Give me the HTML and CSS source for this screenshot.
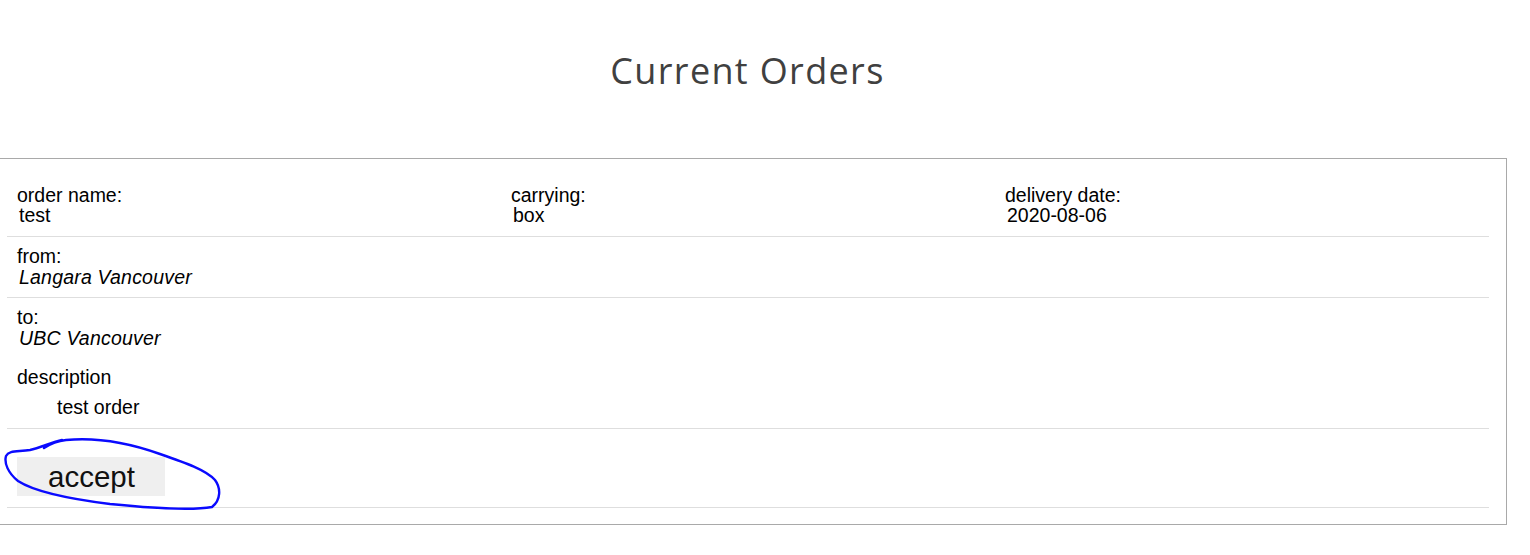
FILE: index.html
```html
<!DOCTYPE html>
<html lang="en">
<head>
<meta charset="utf-8">
<title>Current Orders</title>
<link rel="stylesheet" href="styles.css">
</head>
<body>
<div class="page">
  <h1 class="title">Current Orders</h1>
  <div class="orders">
    <div class="order">
      <div class="row row-meta">
        <div class="field">
          <div class="label">order name:</div>
          <div class="value">test</div>
        </div>
        <div class="field">
          <div class="label">carrying:</div>
          <div class="value">box</div>
        </div>
        <div class="field">
          <div class="label">delivery date:</div>
          <div class="value">2020-08-06</div>
        </div>
      </div>
      <div class="row">
        <div class="label">from:</div>
        <div class="value place">Langara Vancouver</div>
      </div>
      <div class="row">
        <div class="label">to:</div>
        <div class="value place">UBC Vancouver</div>
        <div class="label desc-label">description</div>
        <div class="desc-text">test order</div>
      </div>
      <div class="row row-action">
        <button class="accept" type="button">accept</button>
      </div>
    </div>
  </div>
</div>
<svg class="scribble" width="1530" height="555" viewBox="0 0 1530 555" aria-hidden="true">
  <path d="M44 448 C50 444, 56 441, 66 440 C98 437, 132 444, 160 454 C186 463, 206 470, 215 480 C221 488, 221 500, 212 507 C190 511, 150 508, 110 504 C70 499, 35 492, 18 481 C8 473, 4 463, 6 456 C9 450, 18 452, 30 450 C40 448, 52 442, 62 440" fill="none" stroke="#0a0aff" stroke-width="2.4" stroke-linecap="round" stroke-linejoin="round"/>
</svg>
</body>
</html>
```

FILE: styles.css
```css
html, body {
  margin: 0;
  padding: 0;
  background: #ffffff;
}

body {
  font-family: "Liberation Sans", Arial, sans-serif;
  color: #000000;
  overflow: hidden;
}

.page {
  margin-left: -12px;
  width: 1519px;
}

.title {
  margin: 46px 0 63px;
  font-family: "Open Sans", "Noto Sans", sans-serif;
  font-weight: 400;
  font-size: 36px;
  letter-spacing: 1.35px;
  line-height: 49px;
  color: #404040;
  text-align: center;
}

.orders {
  border: 1px solid #a9a9a9;
  padding: 17px 17px 16px 18px;
}

.row {
  padding: 9px 0 9px 10px;
  border-bottom: 1px solid #dedede;
  font-size: 19.5px;
}

.row-meta {
  display: grid;
  grid-template-columns: 494px 494px 1fr;
  padding-bottom: 10px;
}

.label {
  line-height: 20px;
}

.value {
  line-height: 21px;
  padding-left: 2px;
}

.place {
  font-style: italic;
  line-height: 22px;
  letter-spacing: 0.2px;
}

.desc-label {
  margin-top: 18px;
}

.desc-text {
  margin: 10px 0 2px 40px;
  line-height: 20px;
}

.row-action {
  padding-top: 28px;
  padding-bottom: 11px;
}

.accept {
  display: block;
  height: 39px;
  padding: 0 30px 0 31px;
  border: none;
  background: #efefef;
  font-family: "Liberation Sans", Arial, sans-serif;
  font-size: 29.5px;
  color: #111111;
}

.scribble {
  position: absolute;
  left: 0;
  top: 0;
  pointer-events: none;
}
```
